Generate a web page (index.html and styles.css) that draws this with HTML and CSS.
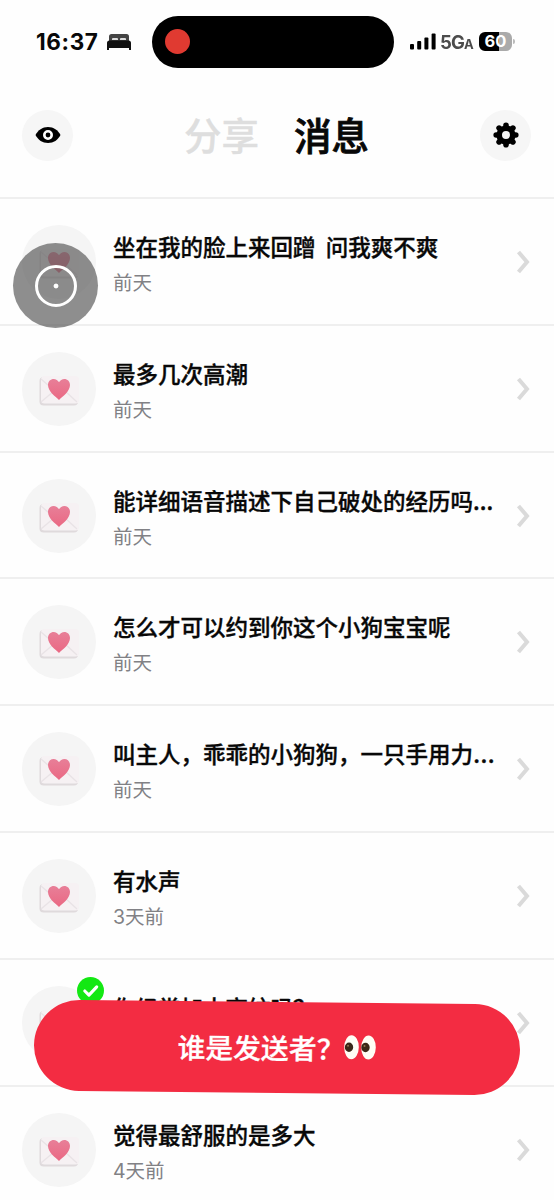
FILE: index.html
```html
<!DOCTYPE html>
<html lang="zh-CN">
<head>
<meta charset="utf-8">
<title>消息</title>
<link rel="stylesheet" href="styles.css">
</head>
<body>
<svg class="defs" aria-hidden="true">
  <defs>
    <linearGradient id="heart-fill" x1="0" y1="0" x2="0" y2="1">
      <stop offset="0" stop-color="#e87f98"/>
      <stop offset="1" stop-color="#ea6883"/>
    </linearGradient>
    <filter id="soft" x="-10%" y="-10%" width="120%" height="120%"><feGaussianBlur stdDeviation=".7"/></filter>
    <symbol id="letter" viewBox="0 0 74 74">
      <g filter="url(#soft)">
        <rect x="17.500" y="25" width="38.500" height="28.500" rx="4" fill="#dfdadc"/>
        <rect x="19" y="24" width="38" height="27.500" rx="3.500" fill="#f6f1f3"/>
        <path d="M19 27l15 13M19 50l13-11M55 50L43 39" fill="none" stroke="#e9e3e6" stroke-width="1.300"/>
      </g>
      <path d="M37 48C33.500 44.500 26 39.500 26 33c0-3.700 2.700-6 5.600-6 2.300 0 4.300 1.300 5.400 3.300C38.100 28.300 40.100 27 42.400 27c2.900 0 5.600 2.300 5.600 6 0 6.500-7.500 11.500-11 15z" fill="url(#heart-fill)"/>
    </symbol>
    <symbol id="chevron" viewBox="0 0 14 24">
      <path d="M2.500 2l8.500 10-8.500 10" fill="none" stroke="#dadada" stroke-width="4"/>
    </symbol>
  </defs>
</svg>
<div class="phone">
  <header class="status">
    <span class="clock">16:37</span>
    <svg class="bed" viewBox="0 0 26 18">
      <path d="M3 8V3.500Q3 1 5.500 1h15Q23 1 23 3.500V8z" fill="#444"/>
      <path d="M6 7V6q0-1 1-1h4q1 0 1 1v1zM14 7V6q0-1 1-1h4q1 0 1 1v1z" fill="#ddd"/>
      <path d="M1 17v-7q0-2.500 2.500-2.500h19Q25 7.500 25 10v7h-2v-2H3v2z" fill="#111"/>
    </svg>
    <div class="island"><span class="record"></span></div>
    <svg class="signal" viewBox="0 0 26 17">
      <rect x="0" y="11" width="4" height="5.500" rx="1"/>
      <rect x="7.200" y="8" width="4" height="8.500" rx="1"/>
      <rect x="14.400" y="4.500" width="4" height="12" rx="1"/>
      <rect x="21.600" y="0.500" width="4" height="16" rx="1"/>
    </svg>
    <span class="network">5G<small>A</small></span>
    <span class="battery">60</span>
    <span class="battery-tip"></span>
  </header>

  <nav class="nav">
    <button class="round-btn" aria-label="查看">
      <svg class="eye" viewBox="0 0 26 18">
        <path d="M.5 9C3 4 7.500 1 13 1s10 3 12.500 8C23 14 18.500 17 13 17S3 14 .5 9z"/>
        <circle cx="13" cy="9" r="3.700" fill="none" stroke="#fff" stroke-width="2.600"/>
      </svg>
    </button>
    <div class="tabs"><span class="tab">分享</span><span class="tab active">消息</span></div>
    <button class="round-btn" aria-label="设置">
      <svg class="gear" viewBox="-13 -13 26 26">
        <circle r="6.800" fill="none" stroke="#000" stroke-width="5.600"/>
        <g stroke="#000" stroke-width="5.600" stroke-linejoin="round" stroke-linecap="round">
          <path d="M0-8v-1.800M0 8v1.800M-8 0h-1.800M8 0h1.800M5.700-5.700l1.200-1.200M-5.700-5.700l-1.200-1.200M5.700 5.700l1.200 1.200M-5.700 5.700l-1.200 1.200"/>
        </g>
      </svg>
    </button>
  </nav>

  <main class="list">
    <article class="row"><svg class="avatar"><use href="#letter"/></svg><div class="body"><h2>坐在我的脸上来回蹭&nbsp; 问我爽不爽</h2><p>前天</p></div><svg class="chev"><use href="#chevron"/></svg></article>
    <article class="row"><svg class="avatar"><use href="#letter"/></svg><div class="body"><h2>最多几次高潮</h2><p>前天</p></div><svg class="chev"><use href="#chevron"/></svg></article>
    <article class="row"><svg class="avatar"><use href="#letter"/></svg><div class="body"><h2>能详细语音描述下自己破处的经历吗...</h2><p>前天</p></div><svg class="chev"><use href="#chevron"/></svg></article>
    <article class="row"><svg class="avatar"><use href="#letter"/></svg><div class="body"><h2>怎么才可以约到你这个小狗宝宝呢</h2><p>前天</p></div><svg class="chev"><use href="#chevron"/></svg></article>
    <article class="row"><svg class="avatar"><use href="#letter"/></svg><div class="body"><h2>叫主人，乖乖的小狗狗，一只手用力<span class="dots">…</span></h2><p>前天</p></div><svg class="chev"><use href="#chevron"/></svg></article>
    <article class="row"><svg class="avatar"><use href="#letter"/></svg><div class="body"><h2>有水声</h2><p>3天前</p></div><svg class="chev"><use href="#chevron"/></svg></article>
    <article class="row"><svg class="avatar"><use href="#letter"/></svg><svg class="check" viewBox="0 0 26 26"><circle cx="13" cy="13" r="13" fill="#13e813"/><path d="M7.500 13.500l4 4 7.500-8" fill="none" stroke="#fff" stroke-width="3" stroke-linecap="round" stroke-linejoin="round"/></svg><div class="body"><h2>你经常加大高纹吗？</h2></div><svg class="chev"><use href="#chevron"/></svg></article>
    <article class="row"><svg class="avatar"><use href="#letter"/></svg><div class="body"><h2>觉得最舒服的是多大</h2><p>4天前</p></div><svg class="chev"><use href="#chevron"/></svg></article>
  </main>

  <div class="assistive"><span class="ring"></span></div>

  <button class="cta"><span>谁是发送者？</span>
    <svg class="eyes" viewBox="0 0 32 25">
      <ellipse cx="7.500" cy="12.500" rx="7.300" ry="12" fill="#fffdf5"/>
      <ellipse cx="24.500" cy="12.500" rx="7.300" ry="12" fill="#fffdf5"/>
      <ellipse cx="5" cy="12.500" rx="4.200" ry="4.700" fill="#3b2718"/>
      <ellipse cx="21.500" cy="12.500" rx="4.200" ry="4.700" fill="#3b2718"/>
      <circle cx="4" cy="11" r="1" fill="#8d7453"/><circle cx="20.500" cy="11" r="1" fill="#8d7453"/>
    </svg>
  </button>
</div>
</body>
</html>
```
FILE: styles.css
```css
* { box-sizing: border-box; margin: 0; padding: 0; }
body { background: #fefefe; color: #080808; font-family: Inter, "Noto Sans CJK SC", sans-serif; }
button { border: 0; background: none; font: inherit; }
svg { display: block; flex: none; }
.defs { position: absolute; width: 0; height: 0; }
.phone { position: relative; width: 554px; height: 1200px; overflow: hidden; }

.status { display: flex; align-items: center; height: 83px; padding-left: 36px; }
.clock { width: 63px; font-size: 22.5px; font-weight: 700; letter-spacing: .6px; white-space: nowrap; }
.bed { width: 26px; height: 18px; margin-left: 7px; filter: blur(.7px); }
.island { display: flex; align-items: center; width: 242px; height: 52px; margin-left: 20px; padding-left: 13px; border-radius: 26px; background: #000; }
.record { width: 25px; height: 25px; border-radius: 50%; background: #e03a31; }
.signal { width: 26px; height: 17px; margin-left: 16px; }
.network { width: 33px; margin-left: 4px; font-size: 18.5px; font-weight: 700; letter-spacing: -.8px; color: #4c4c4c; filter: blur(.7px); white-space: nowrap; }
.network small { font-size: 13px; }
.battery { width: 33px; height: 19px; margin-left: 6px; border-radius: 6px; background: linear-gradient(90deg, #000 60%, #aaa 60%); color: #fff; font-size: 16.5px; font-weight: 700; line-height: 19px; text-align: center; }
.battery-tip { width: 2px; height: 5px; margin-left: 1px; border-radius: 0 2px 2px 0; background: #bbb; }

.nav { display: flex; align-items: center; justify-content: space-between; height: 114px; padding: 0 23px 10px 22px; }
.round-btn { display: flex; align-items: center; justify-content: center; width: 51px; height: 51px; border-radius: 50%; background: #f6f6f6; }
.eye { width: 26px; height: 18px; }
.gear { width: 26px; height: 26px; }
.tabs { display: flex; gap: 35px; padding-bottom: 2px; font-family: "Noto Sans CJK SC", sans-serif; font-size: 37.5px; font-weight: 500; line-height: 50px; }
.tab { color: #dedede; -webkit-text-stroke: .4px; }
.tab.active { color: #080808; -webkit-text-stroke: .8px; }

.row { position: relative; display: flex; align-items: flex-start; height: 126.8px; padding: 0 24px 0 22px; border-top: 2px solid #efefef; }
.avatar { width: 74px; height: 74px; margin-top: 26px; border-radius: 50%; background: #f5f5f5; }
.body { flex: 1; min-width: 0; padding: 31px 0 0 17px; white-space: nowrap; }
.body h2 { font-family: "Noto Sans CJK SC", sans-serif; font-size: 22.5px; font-weight: 500; line-height: 33px; -webkit-text-stroke: .35px; }
.body .dots { font-family: Inter, sans-serif; font-size: 24px; line-height: 1; }
.body p { margin-top: 6px; color: #818185; font-size: 19.5px; line-height: 29px; }
.chev { width: 14px; height: 24px; margin-top: 51px; }
.check { position: absolute; left: 77px; top: 17px; width: 27px; height: 27px; }

.assistive { position: absolute; left: 13px; top: 243px; display: flex; align-items: center; justify-content: center; width: 85px; height: 85px; border-radius: 50%; background: rgba(92, 92, 92, .69); }
.ring { display: flex; width: 42px; height: 42px; border: 3px solid #fff; border-radius: 50%; background: radial-gradient(circle, #fff 2px, transparent 2.8px); }

.cta { position: absolute; left: 34px; top: 1002px; display: flex; align-items: center; justify-content: center; width: 486px; height: 91px; padding-bottom: 2px; border-radius: 46px; background: #f32c42; color: #fff; font-family: "Noto Sans CJK SC", sans-serif; font-size: 27.8px; font-weight: 500; transform: rotate(.6deg); -webkit-text-stroke: .3px; }
.eyes { width: 32px; height: 25px; }
```
